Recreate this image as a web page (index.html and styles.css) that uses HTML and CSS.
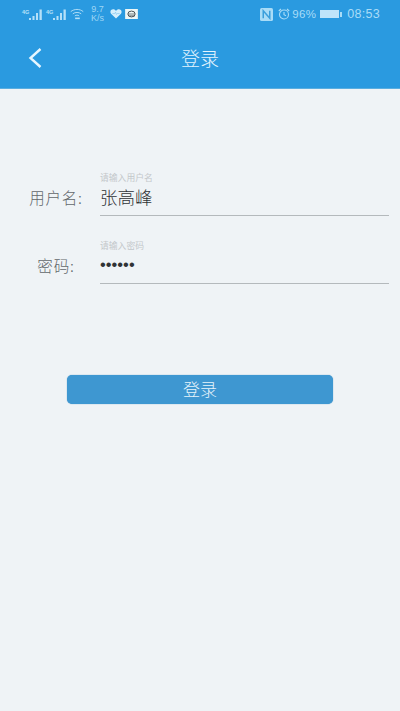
FILE: index.html
```html
<!DOCTYPE html>
<html lang="zh">
<head>
<meta charset="utf-8">
<title>登录</title>
<link rel="stylesheet" href="styles.css">
</head>
<body>
<header class="appbar">
  <div class="status">
    <div class="status-left">
      <span class="signal"><span class="net">4G</span><svg width="14" height="11" viewBox="0 0 14 11"><path d="M0 9h2v2H0zM3.500 7h2v4h-2zM7 4h2v7H7zM10.500 .5h2.300V11h-2.300z" fill="#b5e0f8"/></svg></span>
      <span class="signal"><span class="net">4G</span><svg width="14" height="11" viewBox="0 0 14 11"><path d="M0 9h2v2H0zM3.500 7h2v4h-2zM7 4h2v7H7zM10.500 .5h2.300V11h-2.300z" fill="#b5e0f8"/></svg></span>
      <svg class="wifi" width="14" height="12" viewBox="0 0 15 12" fill="none" stroke="#b5e0f8" stroke-width="1"><path d="M.8 3.500C4.500 .3 10.500 .3 14.200 3.500M3 5.800C5.500 3.800 9.500 3.800 12 5.800M5.200 8C6.500 7 8.500 7 9.800 8"/><path d="M5.500 9.800h5v1.700h-5z" fill="#b5e0f8" stroke="none"/></svg>
      <span class="speed"><span>9.7</span><span>K/s</span></span>
      <svg class="heart" width="12" height="10" viewBox="0 0 13 11"><path d="M6.500 10.500L1 5.200C-.6 3 .9 .4 3.300 .4c1.400 0 2.500.7 3.200 1.800C7.200 1.100 8.300.4 9.700.4c2.400 0 3.900 2.600 2.300 4.800z" fill="#d6effc"/><path d="M2.500 5h2.500l1-1.500 1 2.500 1-1h2.500" fill="none" stroke="#7fc3ec" stroke-width=".7"/></svg>
      <svg class="app-icon" width="13" height="10" viewBox="0 0 14 11"><rect width="14" height="11" fill="#eef7f6"/><ellipse cx="7" cy="5.500" rx="4" ry="3.200" fill="none" stroke="#4a5357" stroke-width="1.100"/><path d="M3.500 5.500h7M4.500 7.500h6" stroke="#4a5357" stroke-width=".8"/></svg>
    </div>
    <div class="status-right">
      <svg width="13" height="13" viewBox="0 0 12 12"><rect width="12" height="12" rx="1.500" fill="#a9dcf7"/><path d="M3 9.500V2.500L9 9.500V2.500" fill="none" stroke="#3a9fdc" stroke-width="1.400"/></svg>
      <svg class="alarm" width="12" height="12" viewBox="0 0 12 12" fill="none" stroke="#a9dcf7" stroke-width="1.100"><circle cx="6" cy="6.500" r="4.500"/><path d="M6 4v2.700l2 1M.8 3L3 1M11.200 3L9 1"/></svg>
      <span class="pct">96%</span>
      <span class="battery"><span class="battery-fill"></span><span class="battery-cap"></span></span>
      <span class="clock">08:53</span>
    </div>
  </div>
  <div class="titlebar">
    <svg class="back" width="16" height="22" viewBox="0 0 16 22" fill="none" stroke="#e6f6ff" stroke-width="2.400"><path d="M13.500 2L3.500 11l10 9"/></svg>
    <h1 class="title">登录</h1>
  </div>
</header>
<main class="form">
  <div class="field">
    <span class="label">用户名:</span>
    <div class="input-wrap">
      <span class="hint">请输入用户名</span>
      <span class="value">张高峰</span>
    </div>
  </div>
  <div class="field">
    <span class="label">密码:</span>
    <div class="input-wrap">
      <span class="hint">请输入密码</span>
      <span class="value dots">••••••</span>
    </div>
  </div>
  <button class="login" type="button">登录</button>
</main>
</body>
</html>
```
FILE: styles.css
```css
* { box-sizing: border-box; }
html, body { margin: 0; height: 100%; }
body {
  width: 400px;
  height: 711px;
  overflow: hidden;
  background: #eff3f6;
  font-family: "Liberation Sans", "Noto Sans CJK SC", sans-serif;
  display: flex;
  flex-direction: column;
}
.appbar {
  height: 89px;
  flex: none;
  background: #2a9ae0;
  border-bottom: 1px solid #5aaee0;
}
.status {
  height: 28px;
  padding: 0 20px 0 22px;
  display: flex;
  justify-content: space-between;
  align-items: center;
}
.status-left, .status-right {
  display: flex;
  align-items: center;
}
.status-left { gap: 3px; }
.status-right { gap: 2px; color: #a9dcf7; }
.signal { display: flex; align-items: flex-start; width: 21px; }
.net { font-size: 5.500px; line-height: 6px; color: #b5e0f8; width: 7px; font-weight: bold; }
.speed {
  display: flex;
  flex-direction: column;
  align-items: center;
  margin: 0 3px 0 4px;
  font-size: 9px;
  line-height: 9px;
  color: #9ed6f5;
}
.pct { font-size: 11.500px; letter-spacing: .3px; }
.alarm { margin-left: 3px; }
.battery { display: flex; align-items: center; margin-left: 2px; }
.battery-fill { width: 19px; height: 8px; background: #bfe4fa; }
.battery-cap { width: 2px; height: 5px; background: #a9dcf7; margin-left: 1px; }
.clock { font-size: 12.500px; margin-left: 3px; letter-spacing: .3px; }
.titlebar {
  height: 60px;
  position: relative;
  display: flex;
  align-items: center;
  justify-content: center;
  padding-bottom: 1px;
}
.back { position: absolute; left: 27px; top: 19px; }
.title {
  margin: 0;
  font-size: 19px;
  font-family: "Noto Sans CJK SC", sans-serif;
  font-weight: 300;
  line-height: 26px;
  color: #e3f4fe;
}
.form {
  padding-top: 81px;
  display: flex;
  flex-direction: column;
}
.field {
  display: flex;
  height: 46px;
  margin-bottom: 22px;
}
.label {
  width: 83px;
  flex: none;
  padding: 17px 0 0 29px;
  text-align: center;
  font-size: 15.500px;
  letter-spacing: .8px;
  font-family: "Noto Sans CJK SC", sans-serif;
  font-weight: 300;
  line-height: 20px;
  color: #62676b;
  white-space: nowrap;
}
.input-wrap {
  width: 289px;
  margin-left: 17px;
  padding-top: 3px;
  border-bottom: 1px solid #b4b9bc;
  display: flex;
  flex-direction: column;
}
.hint {
  font-size: 8.800px;
  line-height: 11px;
  color: #c3c7ca;
}
.value {
  margin-top: 2px;
  font-size: 17.500px;
  font-family: "Noto Sans CJK SC", sans-serif;
  font-weight: 300;
  line-height: 22px;
  color: #303336;
}
.dots { margin-top: 1px; font-size: 16.500px; font-family: "Liberation Sans", sans-serif; font-weight: normal; }
.login {
  align-self: flex-start;
  width: 266px;
  height: 29px;
  margin: 69px 0 0 67px;
  padding: 0 0 2px;
  border: 0;
  border-radius: 5px;
  background: #3e97d1;
  box-shadow: 0 0 1px #3a87bd;
  color: #e6f4fb;
  font-size: 17px;
  font-family: "Noto Sans CJK SC", sans-serif;
  font-weight: 300;
}
```
